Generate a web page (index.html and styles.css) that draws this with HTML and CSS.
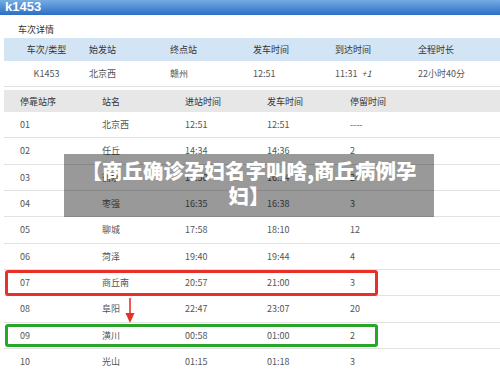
FILE: index.html
```html
<!DOCTYPE html>
<html lang="zh">
<head>
<meta charset="utf-8">
<title>k1453</title>
<link rel="stylesheet" href="styles.css">
</head>
<body>
<div class="page">
  <div class="topbar">k1453</div>
  <div class="section-title">车次详情</div>
  <div class="info-table">
    <div class="info-row info-head">
      <span class="c1">车次/类型</span><span>始发站</span><span>终点站</span><span>发车时间</span><span>到达时间</span><span>全程时长</span>
    </div>
    <div class="info-row info-data">
      <span class="c1">K1453</span><span>北京西</span><span>赣州</span><span>12:51</span><span>11:31 <i>+1</i></span><span>22小时40分</span>
    </div>
  </div>
  <div class="stops">
    <div class="stop-row stop-head">
      <span>停靠站序</span><span>站名</span><span>进站时间</span><span>发车时间</span><span>停留时间</span>
    </div>
    <div class="stop-row"><span>01</span><span>北京西</span><span>12:51</span><span>12:51</span><span>----</span></div>
    <div class="stop-row"><span>02</span><span>任丘</span><span>14:34</span><span>14:36</span><span>2</span></div>
    <div class="stop-row"><span>03</span><span>衡水</span><span>15:50</span><span>16:14</span><span>24</span></div>
    <div class="stop-row"><span>04</span><span>枣强</span><span>16:35</span><span>16:38</span><span>3</span></div>
    <div class="stop-row"><span>05</span><span>聊城</span><span>17:58</span><span>18:10</span><span>12</span></div>
    <div class="stop-row"><span>06</span><span>菏泽</span><span>19:40</span><span>19:44</span><span>4</span></div>
    <div class="stop-row"><span>07</span><span>商丘南</span><span>20:57</span><span>21:00</span><span>3</span><i class="mark mark-red"></i></div>
    <div class="stop-row"><span>08</span><span>阜阳</span><span>22:47</span><span>23:07</span><span>20</span>
      <svg class="arrow" width="12" height="26" viewBox="0 0 12 26"><line x1="6" y1="0" x2="6" y2="17" stroke="#e53228" stroke-width="1.6"/><path d="M1.5 15 L10.5 15 L6 25 Z" fill="#e53228"/></svg>
    </div>
    <div class="stop-row"><span>09</span><span>潢川</span><span>00:58</span><span>01:00</span><span>2</span><i class="mark mark-green"></i></div>
    <div class="stop-row"><span>10</span><span>光山</span><span>01:15</span><span>01:18</span><span>3</span></div>
  </div>
  <div class="caption">【商丘确诊孕妇名字叫啥,商丘病例孕妇】</div>
</div>
</body>
</html>
```
FILE: styles.css
```css
html, body {
  margin: 0;
  padding: 0;
  background: #fff;
}
.page {
  position: relative;
  width: 500px;
  height: 372px;
  overflow: hidden;
  font-family: "Noto Sans CJK SC", "Noto Sans", sans-serif;
  font-size: 9px;
  color: #555;
}
.topbar {
  height: 15px;
  background: linear-gradient(#74ace4, #2c6ec4);
  color: #fff;
  font-family: "Liberation Sans", Arial, sans-serif;
  font-weight: bold;
  font-size: 13px;
  line-height: 14px;
  padding-left: 5px;
}
.section-title {
  padding: 9px 0 2px 18px;
  line-height: 12px;
  color: #333;
}
.info-table {
  margin-left: 4px;
  border-bottom: 1px solid #e2e2e2;
}
.info-row {
  display: grid;
  grid-template-columns: 85px 81px 83px 82px 83px 1fr;
  align-items: center;
}
.info-row .c1 {
  text-align: center;
}
.info-head {
  height: 23px;
  background: #d3e4f5;
  color: #333;
}
.info-data {
  height: 25px;
}
.info-data i {
  font-style: italic;
  margin-left: 2px;
}
.stops {
  margin: 3px 0 0 4px;
}
.stop-row {
  position: relative;
  display: grid;
  grid-template-columns: 82px 83px 82px 83px 1fr;
  align-items: center;
  box-sizing: border-box;
  height: 26.33px;
  padding-left: 16px;
  border-bottom: 1px solid #e2e2e2;
}
.stop-head {
  height: 22px;
  background: #e7e7e7;
  border-bottom: none;
  color: #333;
}
.mark {
  position: absolute;
  left: 1px;
  top: 0;
  width: 373px;
  height: 26px;
  box-sizing: border-box;
  border: 3px solid #e8302a;
  border-radius: 3px;
}
.mark-green {
  top: 1px;
  height: 23px;
  border-color: #2aa52a;
}
.arrow {
  position: absolute;
  left: 120px;
  top: 2px;
}
.caption {
  position: absolute;
  left: 64px;
  top: 154px;
  width: 370px;
  height: 63px;
  box-sizing: border-box;
  padding: 4px 6px 0;
  background: rgba(0, 0, 0, 0.4);
  color: #fff;
  font-weight: 900;
  font-size: 20.5px;
  line-height: 25px;
  text-align: center;
}
```
